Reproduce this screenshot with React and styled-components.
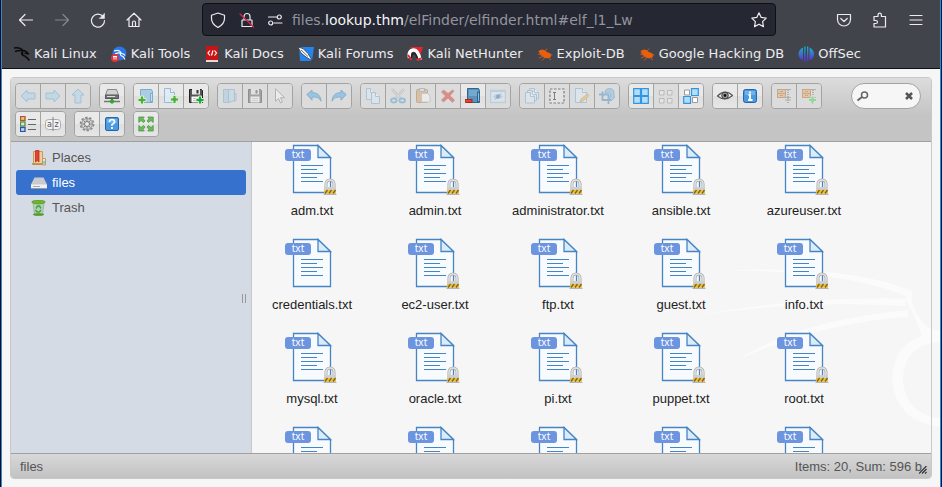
import React from "react";
import styled, { createGlobalStyle } from "styled-components";

const GlobalStyle = createGlobalStyle`
  * { box-sizing: border-box; }
  html, body { margin: 0; padding: 0; }
  button, input { font: inherit; color: inherit; margin: 0; }
`;

const Window = styled.div`
  position: relative;
  display: flex;
  flex-direction: column;
  height: 100vh;
  overflow: hidden;
  background: #f6f6f6;
  border-left: 1px solid #0a0c12;
  border-right: 1px solid #0c1a33;
  font-family: "Liberation Sans", Arial, sans-serif;
`;

const Frame = styled.div`
  position: relative;
  z-index: 1;
  display: flex;
  flex-direction: column;
  flex: 1;
  min-height: 0;
  border-left: 1px solid #2a8ae0;
  border-right: 1px solid #1e90f5;
`;

const Chrome = styled.header`
  background: #42444b;
  color: #fbfbfe;
  border-bottom: 1px solid #0f1014;
  font-family: "DejaVu Sans", sans-serif;
`;

const NavBar = styled.nav`
  display: flex;
  align-items: center;
  height: 39px;
  padding: 0 6px;
`;

const NavButton = styled.button`
  display: flex;
  align-items: center;
  justify-content: center;
  width: 36px;
  height: 32px;
  padding: 0;
  border: 0;
  background: none;
  color: #ececf0;
  opacity: ${(p) => (p.disabled ? 0.4 : 1)};
`;

const AddressBar = styled.div`
  display: flex;
  align-items: center;
  flex: 1;
  height: 33px;
  margin: 0 50px;
  background: #252733;
  border: 1px solid #0f1014;
  border-radius: 4px;
`;

const AddressButton = styled.button`
  display: flex;
  justify-content: center;
  width: ${(p) => p.$width || 28}px;
  padding: 0;
  border: 0;
  background: none;
  color: #ececf0;
`;

const Address = styled.div`
  flex: 1;
  padding-left: 3px;
  font-size: 14px;
  line-height: 20px;
  white-space: nowrap;
  color: #94959c;
  b { font-weight: 400; color: #f4f4f7; }
`;

const Bookmarks = styled.nav`
  display: flex;
  gap: 14px;
  height: 29px;
  padding: 0 12px;
  align-items: center;
`;

const Bookmark = styled.a`
  display: flex;
  align-items: center;
  gap: 4px;
  font-size: 13px;
  line-height: 20px;
  color: #ececf0;
  text-decoration: none;
  white-space: nowrap;
`;

const Finder = styled.main`
  display: flex;
  flex-direction: column;
  flex: 1;
  min-height: 0;
  margin: 8px;
  border: 1px solid #c8c8c8;
  border-radius: 4px;
  overflow: hidden;
  font-size: 13px;
`;

const Toolbar = styled.div`
  display: flex;
  align-items: flex-start;
  padding: 5px 10px 4px 4px;
  background: linear-gradient(#dcdcdc, #c4c4c4 60%, #c4c4c4);
  border-bottom: 1px solid #a0a0a0;
`;

const Groups = styled.div`
  display: flex;
  flex-wrap: wrap;
  gap: 2px 8px;
  flex: 1;
`;

const Group = styled.div`
  display: flex;
  border: 1px solid #a3a3a3;
  border-radius: 4px;
  overflow: hidden;
`;

const Tool = styled.button`
  display: flex;
  align-items: center;
  justify-content: center;
  width: ${(p) => (p.$last ? 24 : 25)}px;
  height: 24px;
  padding: 0;
  border: 0;
  border-right: ${(p) => (p.$last ? "0" : "1px solid #a3a3a3")};
  background: ${(p) => (p.disabled ? "#dcdcdc" : "linear-gradient(#e9e9e9 50%, #dfdfdf 50%, #e6e6e6)")};
  svg { opacity: ${(p) => (p.disabled ? 0.42 : 1)}; }
`;

const Search = styled.label`
  display: flex;
  align-items: center;
  width: 70px;
  height: 26px;
  padding: 0 5px 0 4px;
  border: 1px solid #a3a3a3;
  border-radius: 13px;
  background: #f6f6f6;
  input {
    flex: 1;
    min-width: 0;
    padding: 0;
    border: 0;
    outline: 0;
    background: none;
  }
`;

const ClearButton = styled.button`
  display: flex;
  padding: 0;
  border: 0;
  background: none;
`;

const Workzone = styled.div`
  display: flex;
  flex: 1;
  min-height: 0;
`;

const Sidebar = styled.nav`
  position: relative;
  flex: 0 0 241px;
  padding: 3px 5px;
  background: #d5dbe4;
  border-right: 1px solid #c8c8c8;
`;

const Place = styled.a`
  display: flex;
  align-items: center;
  gap: 5px;
  height: 25px;
  padding-left: 15px;
  border-radius: 3px;
  color: ${(p) => (p.$active ? "#fff" : "#555")};
  background: ${(p) => (p.$active ? "#3671ce" : "none")};
  text-decoration: none;
`;

const Grip = styled.div`
  position: absolute;
  right: 5px;
  top: 50%;
  width: 4px;
  height: 9px;
  margin-top: -4px;
  border: 1px solid #999;
  border-width: 0 1px;
`;

const Files = styled.div`
  flex: 1;
  min-width: 0;
  overflow: hidden;
  display: grid;
  grid-template-columns: repeat(auto-fill, 120px);
  grid-auto-rows: 94px;
  column-gap: 3px;
  align-content: start;
  padding-top: 2px;
`;

const File = styled.figure`
  display: flex;
  flex-direction: column;
  align-items: center;
  gap: 5px;
  margin: 0;
  color: #222;
  figcaption { line-height: 16px; }
`;

const StatusBar = styled.footer`
  display: flex;
  align-items: center;
  justify-content: space-between;
  height: 25px;
  padding: 0 9px;
  color: #555;
  background: linear-gradient(#d8d8d8, #c2c2c2);
  border-top: 1px solid #a0a0a0;
  flex: none;
`;

const Resize = styled.svg`
  position: absolute;
  z-index: 2;
  right: 14px;
  bottom: 13px;
`;

const Watermark = styled.svg`
  position: absolute;
  right: 0;
  top: 265px;
  pointer-events: none;
`;

const Svg = ({ size = 16, children, ...rest }) => (
  <svg width={size} height={size} viewBox={`0 0 ${size} ${size}`} fill="none" aria-hidden="true" {...rest}>
    {children}
  </svg>
);
const Line = ({ children, ...rest }) => (
  <Svg stroke="currentColor" strokeWidth="1.2" strokeLinecap="round" strokeLinejoin="round" {...rest}>{children}</Svg>
);

const arrow = "M1 8L7 2V5H15V11H7V14Z";
const Plus = ({ x = 8, y = 8, c = "#4caf3c" }) => (
  <path d={`M${x + 2.5} ${y}h3v2.5h2.5v3h-2.5v2.5h-3v-2.5h-2.5v-3h2.5z`} fill={c} stroke="#d5efcb" strokeWidth="1" />
);
const Disk = () => (
  <>
    <path d="M1.5 1.5h12l1 1v12h-13z" fill="#555" stroke="#222" />
    <rect x="4" y="1" width="8" height="5.5" fill="#e8e8e8" />
    <rect x="8.5" y="2" width="2" height="3.5" fill="#333" />
    <rect x="3.5" y="8.500" width="9" height="6" fill="#fafafa" />
    <path d="M5 10.5h6M5 12.5h6" stroke="#bbb" />
  </>
);
const Page = ({ x = 2.5, y = 0.5, w = 10, h = 14 }) => (
  <>
    <path d={`M${x} ${y}h${w - 4}l4 4v${h - 4}h-${w}z`} fill="#dcedf9" stroke="#6aa5cd" />
    <path d={`M${x + w - 4} ${y}v4h4`} fill="#fff" stroke="#6aa5cd" />
  </>
);

const icons = {
  back: <path d={arrow} fill="#a9d2f0" stroke="#4d9fd8" />,
  forward: <path d={arrow} fill="#a9d2f0" stroke="#4d9fd8" transform="rotate(180 8 8)" />,
  up: <path d={arrow} fill="#a9d2f0" stroke="#4d9fd8" transform="rotate(90 8 8)" />,
  netmount: <>
    <path d="M3.500 1.500h9l2 5.500v3.500h-13V7z" fill="#d2d2d2" stroke="#888" />
    <path d="M1.500 7h13v3.500h-13z" fill="#777" stroke="#555" /><path d="M3 8.500h8" stroke="#ddd" />
    <path d="M0 13.500h16" stroke="#777" strokeWidth="1.500" /><path d="M8 10.500v3" stroke="#555" strokeWidth="2" />
    <path d="M5 13.500L8 10.800l3 2.700L8 16z" fill="#31a82a" />
  </>,
  mkdir: <><path d="M2.500 1.500h11l1 2v11h-12z" fill="#a8cde4" stroke="#7bacc8" /><path d="M12.500 5.500h2v7l-2 2z" fill="#c5e0f0" stroke="#7bacc8" /><Plus x={0} y={8} /></>,
  mkfile: <><g opacity=".65"><Page x={1.5} /></g><Plus x={7.5} y={7.5} /></>,
  upload: <><Disk /><Plus x={8} y={8} c="#22a045" /></>,
  open: <><path d="M1.5 1.5h6v13h-6z" fill="#9cc6e0" stroke="#64a0c4" /><path d="M6.5 1.500h6v11l-6 2z" fill="#b5d7ea" stroke="#64a0c4" /><path d="M12.500 5.500h1.500v7l-2 1" stroke="#64a0c4" /></>,
  download: <Disk />,
  getfile: <path d="M3.500 .8v12.500l3-2.800 2 4.500 2-1-2-4.300h4z" fill="#fff" stroke="#777" />,
  undo: <path d="M.8 6.500L6 2v2.700c5 0 8.500 2 9 8.500-2-3.800-5-4.400-9-4v3z" fill="#3aa5ea" stroke="#1c71b8" />,
  redo: <path d="M15.200 6.500L10 2v2.700c-5 0-8.500 2-9 8.500 2-3.800 5-4.400 9-4v3z" fill="#3aa5ea" stroke="#1c71b8" />,
  copy: <><Page x={1.5} y={.5} w={8} h={11} /><Page x={6.5} y={4.5} w={8} h={11} /></>,
  cut: <><path d="M2 1l9 10M14 1L5 11" stroke="#8a959c" strokeWidth="2.400" /><path d="M2 1l9 10M14 1L5 11" stroke="#fff" strokeWidth=".8" /><ellipse cx="3.800" cy="12.500" rx="2.800" ry="2" stroke="#3c94ce" strokeWidth="1.800" /><ellipse cx="12.200" cy="12.500" rx="2.800" ry="2" stroke="#3c94ce" strokeWidth="1.800" /></>,
  paste: <><rect x="1.500" y="1.500" width="11" height="13" rx="1" fill="#d39a55" stroke="#a0692c" /><rect x="4.500" y=".5" width="5" height="3" fill="#ddd" stroke="#888" /><path d="M6.500 5.500h6l2.500 2.500v6h-8.500z" fill="#fff" stroke="#aaa" /></>,
  rm: <path d="M1.500 4l2-2 4.500 3.500L12.500 2l1.500 1-4 4.700 4.500 4.300-2 2.500L8 10l-4.500 4-2-2 4-4z" fill="#d8221c" stroke="#a61a16" strokeWidth=".6" />,
  empty: <><path d="M2.500 .5h11l1 2v12h-12z" fill="#5b93bd" stroke="#2e648e" /><path d="M4 2h8v6H4z" fill="#74a9cf" /><path d="M12.500 4.500h2v8l-2 2z" fill="#8bbddd" stroke="#2e648e" /><rect x=".5" y="11.500" width="6.500" height="3" fill="#f43b28" stroke="#931a12" strokeWidth=".7" /></>,
  hide: <><rect x=".5" y="2.500" width="15" height="12" fill="#dcecf8" stroke="#8bbfe5" strokeWidth="1.500" /><path d="M1 3.500h14" stroke="#8bbfe5" /><path d="M3 8.500q5-5 10 0q-5 5-10 0" fill="#87bce5" /><circle cx="8" cy="8.500" r="2" fill="#2a69ac" /><path d="M5 11.500l6-6" stroke="#2a69ac" /></>,
  duplicate: <><Page x={5.500} y={.5} w={9} h={10} /><Page x={3.500} y={2.500} w={9} h={10} /><Page x={1.500} y={4.500} w={9} h={10.500} /></>,
  rename: <><rect x="1" y="1" width="14" height="14" fill="#eee" stroke="#000" strokeWidth="1.200" strokeDasharray="2.500 1.500" /><path d="M4 4.500h3M4 11.500h3M5.500 4.500v7" stroke="#000" /></>,
  edit: <><Page x={1.500} w={11} /><path d="M6 14l1-3 6.500-5 1.500 1.500-6.500 6z" fill="#efb33c" stroke="#a67224" strokeWidth=".7" /></>,
  resize: <><path d="M0 6.500h9.500V12M3.500 3.500v8.500H13M9.500 12V16" stroke="#327fbe" strokeWidth="1.800" /><path d="M6 5q0-4.500 4.500-4.500T15 5v4h1L12.500 12.500 9 9h2.500V6q0-2-1.500-2T8.500 5z" fill="#75b8e9" stroke="#327fbe" strokeWidth=".8" /></>,
  selectall: <path d="M.7 .7h6.800v6.800H.7zM8.500 .7h6.800v6.800H8.500zM.7 8.500h6.800v6.800H.7zM8.500 8.500h6.800v6.800H8.500z" fill="#b5dcfa" stroke="#2e96e2" strokeWidth="1.200" />,
  selectnone: <path d="M1.500 2.500h4.500v4.500h-4.500zM9.500 2.500h4.500v4.500h-4.500zM1.500 10.500h4.500v4.500h-4.500zM9.500 10.500h4.500v4.500h-4.500z" fill="#f2f2f2" stroke="#888" />,
  invert: <><path d="M1.500 2h5v5h-5zM9.500 9.500h5v5h-5z" fill="#fff" stroke="#999" /><path d="M8.500 .7h6.800v6.800H8.500zM.7 8.500h6.800v6.800H.7z" fill="#b5dcfa" stroke="#2e96e2" strokeWidth="1.200" /></>,
  preview: <><path d="M.3 8Q8 .5 15.700 7.500Q8 14 .3 8z" fill="#eee" stroke="#555" strokeWidth="1.200" /><circle cx="8" cy="7.500" r="3.300" fill="#999" stroke="#444" /><circle cx="8" cy="7.500" r="1.400" fill="#111" /></>,
  info: <><rect x="1.500" y="1.500" width="13" height="13" rx="2" fill="#4a9ae0" stroke="#2464ac" /><path d="M3 3h10v4H3z" fill="#6fb3ec" /><path d="M8 3.500v2M6.500 7H8v5M6 12h4.500" stroke="#fff" strokeWidth="1.800" /></>,
  extract: <><rect x="1.500" y="1.500" width="8" height="8" fill="#eda85e" stroke="#a9601c" /><path d="M2 5.500h7M4 3.500h3M4 7.500h3" stroke="#a9601c" /><path d="M9.500 1.500H15M9.500 9.500H15M9 12h6" stroke="#777" /><path d="M12 2v13" stroke="#777" strokeWidth="2" strokeDasharray="1 1" /></>,
  archive: <><rect x="1.500" y="1.500" width="8" height="8" fill="#eda85e" stroke="#a9601c" /><path d="M2 5.500h7M4 3.500h3M4 7.500h3" stroke="#a9601c" /><path d="M9.500 1.500H15M9.500 9.500H15" stroke="#777" /><path d="M12 2v7" stroke="#777" strokeWidth="2" strokeDasharray="1 1" /><Plus x={7.500} y={8} c="#32c54a" /></>,
  view: <><rect x=".5" y=".5" width="4.500" height="4" fill="#f4bd8e" stroke="#a75c28" strokeWidth="1.300" /><rect x=".5" y="6" width="4.500" height="4" fill="#d7efcc" stroke="#56914a" strokeWidth="1.300" /><rect x=".5" y="11.500" width="4.500" height="4" fill="#bddcf5" stroke="#2b52a4" strokeWidth="1.300" /><path d="M8 3.500h8M8 8.500h8M8 13.500h8" stroke="#666" /></>,
  sort: <><rect x=".5" y="3.500" width="15" height="10" rx="3" fill="#f4f4f4" stroke="#aaa" /><path d="M8 1v14" stroke="#888" /><text x="2" y="11" fontSize="8" fontFamily="DejaVu Sans" fill="#555">a</text><text x="9.500" y="11" fontSize="8" fontFamily="DejaVu Sans" fill="#555">z</text></>,
  prefs: <><circle cx="8" cy="8" r="5.500" fill="#d0d0d0" stroke="#999" /><circle cx="8" cy="8" r="6.600" stroke="#888" strokeWidth="1.500" strokeDasharray="2.500 1.647" /><circle cx="8" cy="8" r="2.500" fill="#ececec" stroke="#777" /><path d="M8 3v2M8 11v2M3 8h2M11 8h2M4.500 4.500l1.500 1.500M10 10l1.500 1.500M11.500 4.500l-1.500 1.500M6 10l-1.500 1.500" stroke="#888" /></>,
  help: <><rect x="1.500" y="1.500" width="13" height="13" rx="1.500" fill="#4a9ae0" stroke="#2464ac" /><path d="M3 3h10v4H3z" fill="#6fb3ec" /><path d="M5.500 6q0-2.500 2.500-2.500T10.500 6q0 1.500-2.500 2.500v1.200M8 11v2" stroke="#fff" strokeWidth="1.700" /></>,
  fullscreen: <path d="M.8 1h5.500L5 2.500l2 2.500-1.500 1.500L3 4.500 .8 6.500zM15.200 1v5.500L13 4.500l-2.500 2L9 5l2-2.500L9.700 1zM.8 15v-5.500L3 11.500l2.500-2L7 11l-2 2.500L6.300 15zM15.200 15H9.700L11 13.500 9 11l1.500-1.500 2.500 2 2.200-2z" fill="#6bbb5c" stroke="#408f36" strokeWidth=".7" />,
};

const off = true;
const toolGroups = [
  [["back", off], ["forward", off], ["up", off]],
  [["netmount"]],
  [["mkdir"], ["mkfile"], ["upload"]],
  [["open", off], ["download", off], ["getfile", off]],
  [["undo", off], ["redo", off]],
  [["copy", off], ["cut", off], ["paste", off], ["rm", off], ["empty"], ["hide", off]],
  [["duplicate", off], ["rename", off], ["edit", off], ["resize", off]],
  [["selectall"], ["selectnone", off], ["invert"]],
  [["preview"], ["info"]],
  [["extract", off], ["archive", off]],
  [["view"], ["sort"]],
  [["prefs"], ["help"]],
  [["fullscreen"]],
];

const dragon = "M0 2q6-1 9 2.500M1 5.500q5-1.500 8-.500q-3 3 .5 4.500t6 5M9 4.500q3 0 5.500 3.500-2-1-4-.5M9 6.500q-2 3 3 3.800";
const Bug = () => (
  <Svg>
    <path d="M1.500 5q4.500-3.500 8.500 1l3.500 1.500q1.500 1.500 0 4l-3 .8q-6 .5-9-7.300z" fill="#ea5f0c" />
    <path d="M1 8l4 1M2 12l5-2M5 14.500l3-3M8 5l2-2.500M12.500 8.500l3 .5M11 11.500l3 2.500" stroke="#c0602a" strokeWidth=".9" />
  </Svg>
);
const bookmarks = [
  ["Kali Linux", <Svg key="i"><path d={dragon} stroke="#0b0b0b" strokeWidth="1.500" strokeLinejoin="round" /></Svg>],
  ["Kali Tools", <Svg key="i"><circle cx="8.500" cy="7.500" r="7" fill="#2876e8" /><path d="M3 5q5-2 7 1.500-2 3 2 4l2 3M4 8q4-2 6-.5 3 0 4 2" stroke="#fff" strokeWidth="1.200" /><circle cx="4" cy="12" r="4" fill="#e43239" /><path d="M2 10.500h4M3 10.500v3M5 10.500v3" stroke="#fff" /></Svg>],
  ["Kali Docs", <Svg key="i"><path d="M2 0h11q1 0 1 1v14H2z" fill="#c81414" /><path d="M2 14h12v2H2z" fill="#eed7d7" /><path d="M6 4.500L4 7l2 2.500M10.500 4.500L12.500 7l-2 2.500M9 4.500L7.500 9.500" stroke="#fff" strokeWidth="1.200" /></Svg>],
  ["Kali Forums", <Svg key="i"><path d="M1 1h15l-2 14H2z" fill="#2585ee" /><path d="M0 1l5 1.500 5 5 4.500 7.500-6.500-4-5-4z" fill="#fff" stroke="#263548" strokeWidth=".8" /><path d="M3 4l7 6.500" stroke="#444" strokeWidth=".8" /></Svg>],
  ["Kali NetHunter", <Svg key="i"><path d="M3 1h13l-3 9z" fill="#e8252d" /><path d="M2.500 12Q1 4 7 4q4 0 6 10" stroke="#fff" strokeWidth="3.500" /><path d="M4.500 12Q4.500 7.500 7 7.500q2 0 3.500 5" stroke="#222" strokeWidth="1.500" /><path d="M1 9l3.500 5M9.500 14l4.500-1.500" stroke="#e8252d" strokeWidth="2" /></Svg>],
  ["Exploit-DB", <Bug key="i" />],
  ["Google Hacking DB", <Bug key="i" />],
  ["OffSec", <Svg key="i"><defs><linearGradient id="os" x1="0" y1="0" x2="0" y2="1"><stop stopColor="#16b8c5" /><stop offset="1" stopColor="#6424d8" /></linearGradient></defs><path d="M5 1.500v13Q.5 12 .5 8T5 1.500zM6.200 .5h1.300V16L6.200 15zM9 .5h1.300V15L9 16zM11.500 1.500v13q4.500-2 4.500-6.500t-4.500-6.500z" fill="url(#os)" /></Svg>],
];

const places = [
  ["Places", <Svg key="i"><path d="M2.500 1.500h9v13h-9z" fill="#ecd097" stroke="#c99a50" /><path d="M4.500 .5h3.500v11.500L6.200 10.500 4.500 12z" fill="#e2403c" stroke="#b71f1f" strokeWidth=".7" /><path d="M1 14h11" stroke="#b98a40" strokeWidth="1.500" /><path d="M11.500 8.500h3v6.500h-3z" fill="#d3eafa" stroke="#c99a50" /><path d="M13 11v3" stroke="#4ba4df" /></Svg>],
  ["files", <Svg key="i"><path d="M3.500 2.500h9L16 9.500v4H0v-4z" fill="#c9c9ce" /><path d="M0 9.500h16v4H0z" fill="#f0f0f3" /><path d="M0 13.500h16" stroke="#999" /><path d="M2 11.500h7" stroke="#aaa" /></Svg>],
  ["Trash", <Svg key="i"><path d="M2 3h11l-1.500 12h-8z" fill="#b3cfb8" stroke="#91aa97" strokeWidth=".7" /><ellipse cx="7.500" cy="2" rx="6.800" ry="1.900" fill="#6cb52d" stroke="#438915" strokeWidth=".5" /><ellipse cx="7.500" cy="14.500" rx="5.500" ry="1.300" fill="#529b22" /><path d="M5 8.500L6.500 6h2L10 8.500M10 10l-1.500 2h-2.500l-1.500-2" stroke="#45a43b" strokeWidth="1.500" /></Svg>],
];

const files = [
  "adm.txt", "admin.txt", "administrator.txt", "ansible.txt", "azureuser.txt",
  "credentials.txt", "ec2-user.txt", "ftp.txt", "guest.txt", "info.txt",
  "mysql.txt", "oracle.txt", "pi.txt", "puppet.txt", "root.txt",
  "", "", "", "", "",
];

const TextFileIcon = ({ locked }) => (
  <svg width="56" height="54" viewBox="0 0 56 54" fill="none" aria-hidden="true">
    <path d="M9.500 1.500H34L46.500 13.500V48.500H9.500Z" fill="#f8fbfe" stroke="#4585c4" strokeWidth="1.300" />
    <path d="M34 1.500V13.500H46.500Z" fill="#dcebf8" stroke="#4585c4" strokeWidth="1.300" />
    <path d="M17 21.500H39M17 25.500H33M17 29.500H39M17 33.500H33M17 37.500H39" stroke="#4585c4" strokeWidth="1.200" />
    <rect x="1" y="5" width="26" height="12" rx="3" fill="#6c94df" />
    <text x="14" y="14" textAnchor="middle" fontSize="10" fontFamily="Noto Sans" fill="#fff">txt</text>
    {locked && (
      <>
        <path d="M42 44V40a4 4 0 0 1 8 0V44" stroke="#a9a9a9" strokeWidth="3" />
        <path d="M42 44V40a4 4 0 0 1 8 0V44" stroke="#e2e2e2" strokeWidth="1.600" />
        <rect x="40" y="43" width="12" height="7" fill="#cfcfcf" />
        <rect x="40" y="46" width="12" height="3.500" fill="#f3c22b" />
        <path d="M41 49.500l2.500-3.500M45 49.500l2.500-3.500M49 49.500l2.500-3.500" stroke="#7a6530" strokeWidth="1.300" />
        <path d="M39.500 50.500h13" stroke="#b5b5b5" />
      </>
    )}
  </svg>
);

export default function App() {
  return (
    <Window>
      <GlobalStyle />
      <Watermark width="240" height="170" viewBox="701 265 240 170" fill="#fff" opacity=".6" aria-hidden="true">
        <path d="M727 270.500Q850 265 912 291L911 298Q850 271 727 270.500Z" />
        <path d="M701 315Q800 296 905 298.500L906 306Q800 300 701 315Z" />
        <path d="M737 360Q800 320 908 310V317Q820 323 737 360Z" />
        <path d="M905 298L912 291Q910 306 920 318 926 330 941 331V342Q903 344 903 381 906 415 941 418V427Q896 422 892 380 893 345 922 336 914 314 905 298Z" />
      </Watermark>
      <Frame>
        <Chrome>
          <NavBar aria-label="Navigation">
            <NavButton aria-label="Back"><Line><path d="M1.500 8h13M7 2.500L1.500 8 7 13.500" /></Line></NavButton>
            <NavButton aria-label="Forward" disabled><Line><path d="M1.500 8h13M9 2.500L14.500 8 9 13.500" /></Line></NavButton>
            <NavButton aria-label="Reload"><Line><path d="M13 4.500A6.500 6.500 0 1 0 14.500 8.500" /><path d="M14.500 1.500v5h-5z" fill="currentColor" strokeWidth=".5" /></Line></NavButton>
            <NavButton aria-label="Home"><Line><path d="M1 8L8 1.200 15 8M3 6.500v8h10v-8M6.500 14.500V10.500q0-1.500 1.500-1.500t1.500 1.500v4" /></Line></NavButton>
            <AddressBar>
              <AddressButton aria-label="Protection" $width={30}><Line><path d="M8 1l6.500 2.300v3.200q0 5.500-6.500 9-6.500-3.500-6.500-9V3.300z" /></Line></AddressButton>
              <AddressButton aria-label="Connection not secure"><Line><path d="M3.500 8h9q.5 0 .5.500v6h-10v-6zM5 8V4.500a3 3 0 0 1 6 0V8" /><path d="M1 2l13.500 13" stroke="#e0224e" /></Line></AddressButton>
              <AddressButton aria-label="Permissions"><Line><path d="M1.500 5h8M7 11h8" /><circle cx="12.300" cy="5" r="2" /><circle cx="3.700" cy="11" r="2" /></Line></AddressButton>
              <Address role="textbox" aria-label="Address">files.<b>lookup.thm</b>/elFinder/elfinder.html#elf_l1_Lw</Address>
              <AddressButton aria-label="Bookmark page" $width={32}><Line><path d="M8 .8l2.200 4.600 5 .7-3.600 3.500.9 5L8 12.200l-4.500 2.400.9-5L.8 6.100l5-.7z" /></Line></AddressButton>
            </AddressBar>
            <NavButton aria-label="Pocket"><Line><path d="M1.500 2.500h13v5a6.500 6.500 0 0 1-13 0zM4.800 6.500L8 9.500l3.200-3" /></Line></NavButton>
            <NavButton aria-label="Extensions"><Line><path d="M2 4.500h4V3q0-1.800 1.700-1.800T9.400 3v1.500h4.100v10.500H2V11.500h1.800q1.700 0 1.700-1.500T3.800 8.500H2z" /></Line></NavButton>
            <NavButton aria-label="Menu"><Line><path d="M2 3.500h12M2 8h12M2 12.500h12" /></Line></NavButton>
          </NavBar>
          <Bookmarks aria-label="Bookmarks">
            {bookmarks.map(([name, icon]) => <Bookmark href="#" key={name}>{icon}{name}</Bookmark>)}
          </Bookmarks>
        </Chrome>
        <Finder>
          <Toolbar>
            <Groups>
              {toolGroups.map((group) => (
                <Group key={group[0][0]}>
                  {group.map(([name, disabled], i) => (
                    <Tool key={name} aria-label={name} disabled={disabled} $last={i === group.length - 1}>
                      <Svg>{icons[name]}</Svg>
                    </Tool>
                  ))}
                </Group>
              ))}
            </Groups>
            <Search>
              <Svg><path d="M1.500 12.500L6 9" stroke="#666" strokeWidth="2" /><circle cx="8.500" cy="7" r="3" stroke="#666" strokeWidth="1.500" /></Svg>
              <input type="text" aria-label="Search" />
              <ClearButton aria-label="Clear search"><Svg size={12}><path d="M3 3l6 6M9 3L3 9" stroke="#555" strokeWidth="2.500" /></Svg></ClearButton>
            </Search>
          </Toolbar>
          <Workzone>
            <Sidebar aria-label="Folders">
              {places.map(([name, icon]) => <Place href="#" key={name} $active={name === "files"}>{icon}{name}</Place>)}
              <Grip />
            </Sidebar>
            <Files>
              {files.map((name, i) => (
                <File key={i}>
                  <TextFileIcon locked={name !== "credentials.txt"} />
                  {name && <figcaption>{name}</figcaption>}
                </File>
              ))}
            </Files>
          </Workzone>
          <StatusBar><span>files</span><span>Items: 20, Sum: 596 b</span></StatusBar>
        </Finder>
      </Frame>
      <Resize width="8" height="8" viewBox="0 0 8 8" stroke="#333" strokeWidth="1.200" aria-hidden="true"><path d="M0 7.500L7.500 0M3 7.500L7.500 3M6 7.500L7.500 6" /></Resize>
    </Window>
  );
}
